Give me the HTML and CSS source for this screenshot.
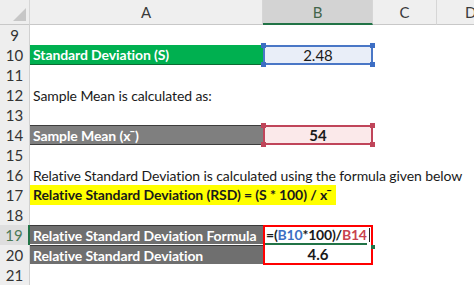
FILE: index.html
```html
<!DOCTYPE html>
<html lang="en">
<head>
    <meta charset="UTF-8">
    <title>Relative Standard Deviation</title>
    <link rel="stylesheet" href="styles.css">
</head>
<body>
    <div class="sheet">
        <!-- column headers -->
        <div class="corner"><span class="corner-tri"></span></div>
        <div class="col-head">A</div>
        <div class="col-head active">B</div>
        <div class="col-head">C</div>
        <div class="col-head last">D</div>

        <!-- 9 -->
        <div class="row-head">9</div>
        <div class="cell wide"></div>

        <!-- 10 -->
        <div class="row-head">10</div>
        <div class="cell label green">Standard Deviation (S)</div>
        <div class="cell value blue">2.48
            <i class="handle tl"></i><i class="handle tr"></i><i class="handle bl"></i><i class="handle br"></i>
        </div>
        <div class="cell rest"></div>

        <!-- 11 -->
        <div class="row-head">11</div>
        <div class="cell wide"></div>

        <!-- 12 -->
        <div class="row-head">12</div>
        <div class="cell wide text">Sample Mean is calculated as:</div>

        <!-- 13 -->
        <div class="row-head">13</div>
        <div class="cell wide"></div>

        <!-- 14 -->
        <div class="row-head">14</div>
        <div class="cell label grey">Sample Mean (x<span class="bar">&#x00AF;</span>)</div>
        <div class="cell value pink">54
            <i class="handle tl"></i><i class="handle tr"></i><i class="handle bl"></i><i class="handle br"></i>
        </div>
        <div class="cell rest"></div>

        <!-- 15 -->
        <div class="row-head">15</div>
        <div class="cell wide"></div>

        <!-- 16 -->
        <div class="row-head">16</div>
        <div class="cell wide text">Relative Standard Deviation is calculated using the formula given below</div>

        <!-- 17 -->
        <div class="row-head">17</div>
        <div class="cell wide"><span class="highlight">Relative Standard Deviation (RSD) = (S * 100) / x<span class="bar">&#x00AF;</span></span></div>

        <!-- 18 -->
        <div class="row-head">18</div>
        <div class="cell wide"></div>

        <!-- 19 -->
        <div class="row-head selected">19</div>
        <div class="cell label dark">Relative Standard Deviation Formula</div>
        <div class="result">
            <div class="formula">=(<span class="ref-blue">B10</span>*100)/<span class="ref-red">B14</span><span class="caret"></span></div>
            <div class="answer">4.6</div>
            <i class="fill-dot"></i>
        </div>
        <div class="cell rest"></div>

        <!-- 20 -->
        <div class="row-head">20</div>
        <div class="cell label dark">Relative Standard Deviation</div>
        <div class="cell rest"></div>

        <!-- 21 -->
        <div class="row-head">21</div>
        <div class="cell wide"></div>
    </div>
</body>
</html>
```

FILE: styles.css
```css
* {
    margin: 0;
    padding: 0;
    box-sizing: border-box;
}

body, html {
    width: 474px;
    height: 287px;
    overflow: hidden;
    background: #ffffff;
    font-family: Lato, "Open Sans", sans-serif;
    color: #1a1a1a;
}

.sheet {
    display: grid;
    grid-template-columns: 30px 233px 110px 64px 37px;
    grid-template-rows: 25px repeat(13, 20px);
    overflow: hidden;
}

/* headers */
.corner {
    position: relative;
    background: #eeeeee;
    border-right: 1px solid #d6d6d6;
    border-bottom: 1px solid #c8c8c8;
}

.corner-tri {
    position: absolute;
    right: 3px;
    bottom: 3px;
    width: 0;
    height: 0;
    border-left: 13px solid transparent;
    border-bottom: 13px solid #c7c7c7;
}

.col-head {
    background: #efefef;
    border-right: 1px solid #d6d6d6;
    border-bottom: 1px solid #c8c8c8;
    display: flex;
    align-items: center;
    justify-content: center;
    font-size: 15px;
    color: #3a3a3a;
}

.col-head.last {
    justify-content: flex-start;
    padding-left: 28px;
    border-right: none;
    overflow: hidden;
}

.col-head.active {
    background: #d3d3d3;
    color: #42654a;
    border-bottom: 2px solid #217346;
}

.row-head {
    background: #eeeeee;
    border-right: 1px solid #d0d0d0;
    display: flex;
    align-items: center;
    justify-content: center;
    font-size: 15px;
    color: #333333;
}

.row-head.selected {
    background: #dedede;
    color: #4b7a58;
    border-right: 2px solid #217346;
}

/* cells */
.cell {
    position: relative;
    display: flex;
    align-items: center;
    white-space: nowrap;
    font-size: 14px;
}

.wide {
    grid-column: 2 / span 4;
}

.rest {
    grid-column: 4 / span 2;
}

.text {
    padding-left: 3px;
    letter-spacing: -0.1px;
}

.label {
    padding-left: 3px;
    font-weight: bold;
    color: #ffffff;
    letter-spacing: -0.1px;
}

.bar {
    display: inline-block;
    margin-left: -1px;
    transform: translateY(-1px);
}

.green {
    background: #00b050;
    border-bottom: 1px solid #0c6b33;
}

.grey {
    background: #7f7f7f;
    border-top: 1px solid #3d3d3d;
    border-bottom: 1px solid #3d3d3d;
}

.dark {
    background: #6f6f6f;
    border-top: 1px solid #3a3a3a;
    border-bottom: 1px solid #ffffff;
}

.value {
    justify-content: center;
    font-size: 15px;
}

.blue {
    background: #e9eef8;
    border: 2px solid #4a77c6;
}

.pink {
    background: #fbe9ea;
    border: 2px solid #c0455a;
    font-weight: bold;
}

.handle {
    position: absolute;
    width: 5px;
    height: 5px;
}

.blue .handle { background: #3d6ec4; }
.pink .handle { background: #c0455a; }

.handle.tl { left: -4px; top: -4px; }
.handle.tr { right: -4px; top: -4px; }
.handle.bl { left: -4px; bottom: -4px; }
.handle.br { right: -4px; bottom: -4px; }

.highlight {
    background: #ffff00;
    font-weight: bold;
    padding: 0 4px 0 3px;
    line-height: 20px;
    letter-spacing: -0.1px;
}

/* result box */
.result {
    position: relative;
    grid-column: 3;
    grid-row: span 2;
    border: 2px solid #ff0000;
    display: flex;
    flex-direction: column;
    font-size: 14px;
    font-weight: bold;
}

.formula {
    height: 18px;
    line-height: 16px;
    white-space: nowrap;
    padding-left: 1px;
    border-bottom: 2px solid #217346;
    margin-right: 4px;
    letter-spacing: -0.2px;
}

.ref-blue { color: #3c6fc4; }
.ref-red { color: #c8424f; }

.caret {
    display: inline-block;
    width: 1px;
    height: 14px;
    margin-left: 2px;
    vertical-align: -2px;
    background: #222222;
}

.answer {
    flex: 1;
    display: flex;
    align-items: center;
    justify-content: center;
    font-size: 15px;
}

.fill-dot {
    position: absolute;
    right: -4px;
    top: 18px;
    width: 4px;
    height: 4px;
    background: #217346;
}
```
